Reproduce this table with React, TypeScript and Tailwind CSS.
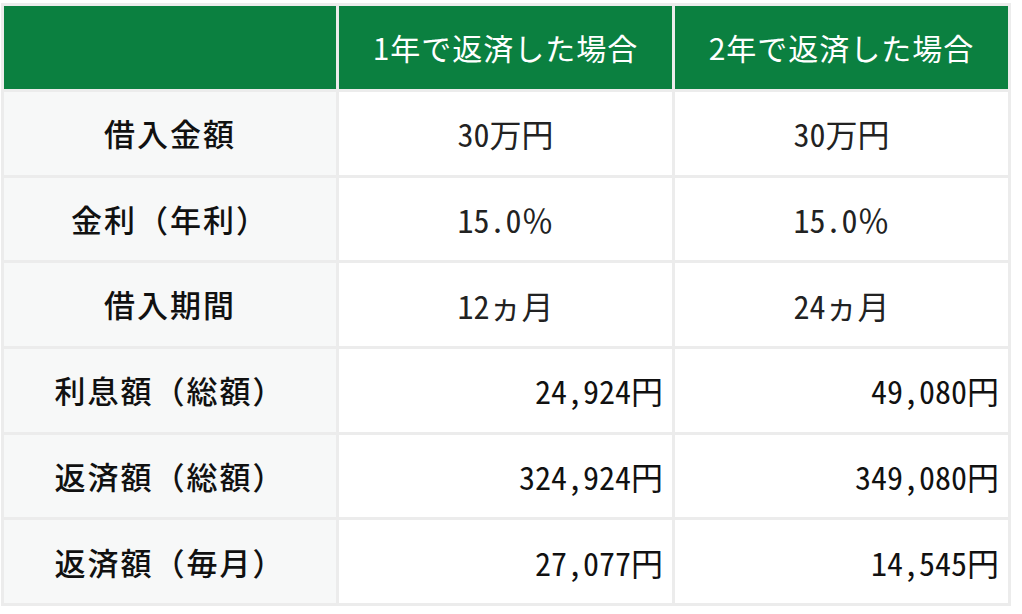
const rows = [
  { label: "借入金額", a: "30万円", b: "30万円", align: "center" },
  { label: "金利（年利）", a: "15.0", b: "15.0", align: "center", pct: true },
  { label: "借入期間", a: "12ヵ月", b: "24ヵ月", align: "center" },
  { label: "利息額（総額）", a: "24,924円", b: "49,080円", align: "right" },
  { label: "返済額（総額）", a: "324,924円", b: "349,080円", align: "right" },
  { label: "返済額（毎月）", a: "27,077円", b: "14,545円", align: "right" },
];

function Value({ text, pct }: { text: string; pct?: boolean }) {
  return (
    <>
      <span className="[font-feature-settings:'hwid']">{text}</span>
      {pct && <span>％</span>}
    </>
  );
}

export default function App() {
  return (
    <div className="min-h-[614px] w-[1022px] bg-white pl-[1px] pt-[3px] font-['Noto_Sans_CJK_JP','Noto_Sans',sans-serif]">
      <table className="w-[1010px] table-fixed border-separate border-spacing-[3px] bg-[#ececec]">
        <colgroup>
          <col className="w-[332px]" />
          <col className="w-[333px]" />
          <col className="w-[333px]" />
        </colgroup>
        <thead>
          <tr className="h-[83px]">
            <th className="bg-[#0b8040]" />
            <th className="bg-[#0b8040] text-center text-[30px] font-normal tracking-[1px] text-white">
              1年で返済した場合
            </th>
            <th className="bg-[#0b8040] text-center text-[30px] font-normal tracking-[1px] text-white">
              2年で返済した場合
            </th>
          </tr>
        </thead>
        <tbody>
          {rows.map((r) => (
            <tr key={r.label} className="h-[82.7px]">
              <td className="bg-[#f7f8f8] text-center text-[31px] font-medium tracking-[2px] text-[#111]">
                {r.label}
              </td>
              <td
                className={
                  r.align === "center"
                    ? "bg-white text-center text-[32px] text-[#222]"
                    : "bg-white pr-[9px] text-right text-[32px] text-[#111]"
                }
              >
                <Value text={r.a} pct={r.pct} />
              </td>
              <td
                className={
                  r.align === "center"
                    ? "bg-white text-center text-[32px] text-[#222]"
                    : "bg-white pr-[9px] text-right text-[32px] text-[#111]"
                }
              >
                <Value text={r.b} pct={r.pct} />
              </td>
            </tr>
          ))}
        </tbody>
      </table>
    </div>
  );
}
